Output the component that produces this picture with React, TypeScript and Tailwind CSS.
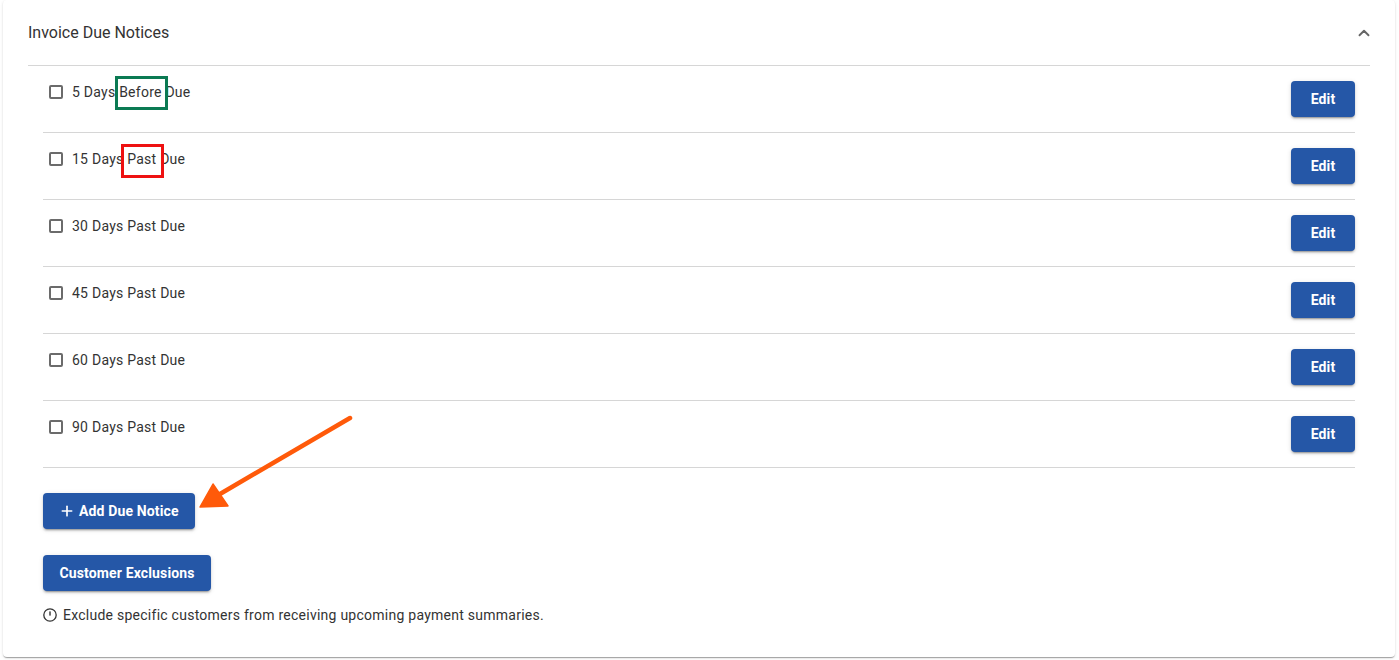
import { ChevronUp, Plus } from 'lucide-react';

const notices = [
  '5 Days Before Due',
  '15 Days Past Due',
  '30 Days Past Due',
  '45 Days Past Due',
  '60 Days Past Due',
  '90 Days Past Due',
];

const btn =
  'h-9 rounded bg-[#2557a7] text-white text-sm font-bold tracking-[0.01em] shadow-[0_3px_1px_-2px_rgba(0,0,0,0.2),0_2px_2px_0_rgba(0,0,0,0.14),0_1px_5px_0_rgba(0,0,0,0.12)]';

const App = () => {
  return (
    <div className="relative min-h-[660px] bg-white pl-[3px] pr-[4px] font-['Roboto',sans-serif] text-[#333]">
      <div className="h-[657px] rounded bg-white shadow-[0_2px_1px_-1px_rgba(0,0,0,0.2),0_1px_1px_0_rgba(0,0,0,0.14),0_1px_3px_0_rgba(0,0,0,0.12)]">
        {/* header */}
        <div className="mx-[25px] flex h-[66px] items-center justify-between border-b border-[#d6d6d6] pt-[1px]">
          <h1 className="text-base text-[#333] leading-6">Invoice Due Notices</h1>
          <ChevronUp className="mr-[-3px] h-[18px] w-[18px] text-[#666]" strokeWidth={2.5} />
        </div>

        <div className="px-[40px]">
          {notices.map((n) => (
            <div key={n} className="flex h-[67px] items-start justify-between border-b border-[#d6d6d6] py-[15px]">
              <label className="flex items-center pt-[1px] pl-[6px]">
                <span className="h-[14px] w-[14px] rounded-[2px] border-2 border-[#6b6b6b]" />
                <span className="ml-[9px] text-sm leading-5 tracking-[0.018em] text-[#333]">{n}</span>
              </label>
              <button className={`${btn} w-16`}>Edit</button>
            </div>
          ))}

          <div className="pt-[25px]">
            <button className={`${btn} flex items-center gap-[4px] px-[16px]`}>
              <Plus className="h-[16px] w-[16px]" strokeWidth={2.5} />
              Add Due Notice
            </button>
          </div>
          <div className="pt-[26px]">
            <button className={`${btn} px-[16.5px]`}>Customer Exclusions</button>
          </div>
          <div className="mt-[14px] flex items-center gap-[6px] text-sm leading-5 tracking-[0.018em] text-[#333]">
            <svg width="14" height="14" viewBox="0 0 14 14" className="shrink-0">
              <circle cx="7" cy="7" r="6.2" fill="none" stroke="#333" strokeWidth="1.3" />
              <rect x="6.3" y="3.4" width="1.4" height="4.2" fill="#333" />
            </svg>
            Exclude specific customers from receiving upcoming payment summaries.
          </div>
        </div>
      </div>

      {/* annotations */}
      <div className="absolute left-[115px] top-[76px] h-[34px] w-[53px] border-[3px] border-[#0b7a53]" />
      <div className="absolute left-[121px] top-[144px] h-[34px] w-[43px] border-[3px] border-[#ee1111]" />
      <svg className="pointer-events-none absolute left-0 top-0" width="1399" height="660">
        <line x1="350" y1="418" x2="220" y2="494" stroke="#ff5a0a" strokeWidth="4.5" strokeLinecap="round" />
        <polygon points="200,507 213,484 228,506" fill="#ff5a0a" stroke="#ff5a0a" strokeWidth="1.5" strokeLinejoin="round" />
      </svg>
    </div>
  );
};

export default App;
